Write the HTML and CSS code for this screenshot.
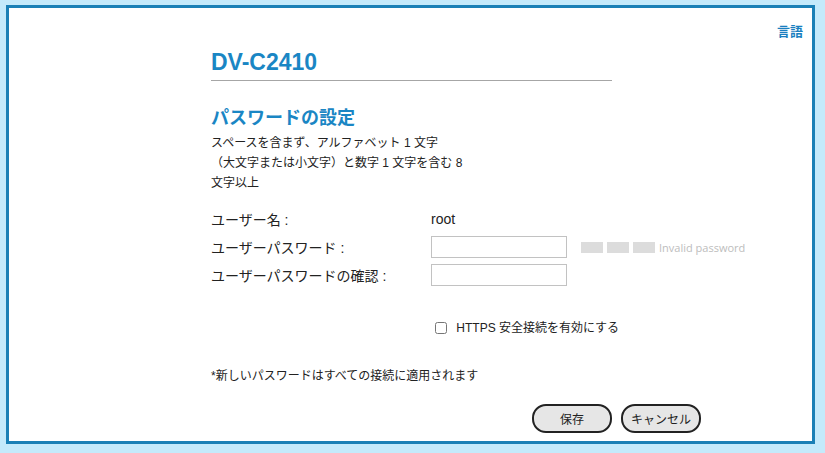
FILE: index.html
```html
<!DOCTYPE html>
<html lang="ja">
<head>
    <meta charset="UTF-8">
    <meta name="viewport" content="width=device-width, initial-scale=1.0">
    <title>DV-C2410</title>
    <link rel="stylesheet" href="styles.css">
</head>
<body>
    <div class="frame">
        <div class="topbar"><a class="lang" href="#">言語</a></div>
        <div class="content">
            <h1>DV-C2410</h1>
            <h2>パスワードの設定</h2>
            <p class="hint">スペースを含まず、アルファベット 1 文字<br>（大文字または小文字）と数字 1 文字を含む 8<br>文字以上</p>

            <div class="form">
                <label>ユーザー名 :</label>
                <span class="value">root</span>

                <label for="pw">ユーザーパスワード :</label>
                <div class="value">
                    <input type="password" id="pw">
                    <span class="strength">
                        <span class="bar"></span><span class="bar"></span><span class="bar"></span>
                        <span class="strength-text">Invalid password</span>
                    </span>
                </div>

                <label for="pw2">ユーザーパスワードの確認 :</label>
                <div class="value">
                    <input type="password" id="pw2">
                </div>
            </div>

            <div class="https">
                <label><input type="checkbox"> HTTPS 安全接続を有効にする</label>
            </div>

            <p class="note">*新しいパスワードはすべての接続に適用されます</p>

            <div class="buttons">
                <button class="save">保存</button>
                <button class="cancel">キャンセル</button>
            </div>
        </div>
    </div>
</body>
</html>
```

FILE: styles.css
```css
body {
    margin: 0;
    background-color: #c4eafb;
    font-family: "Liberation Sans", "Noto Sans CJK JP", sans-serif;
    color: #222;
}
.frame {
    box-sizing: border-box;
    width: 809px;
    height: 439px;
    margin: 5px 0 0 6px;
    border: 3px solid #1a80b6;
    background: #fff;
}
.topbar {
    text-align: right;
    padding: 15px 9px 0 0;
    height: 18px;
    line-height: 16px;
}
.lang {
    font-size: 13px;
    font-weight: bold;
    color: #1a7fc0;
    text-decoration: none;
}
.content {
    width: 560px;
    margin-left: 202px;
}
h1 {
    width: 401px;
    margin: 7px 0 0;
    padding-bottom: 4px;
    font-size: 23px;
    line-height: 28px;
    color: #1a86c4;
    border-bottom: 1px solid #a6a6a6;
}
h2 {
    margin: 25px 0 0;
    font-size: 18px;
    line-height: 24px;
    color: #1a86c4;
}
.hint {
    margin: 3px 0 0;
    font-size: 12px;
    line-height: 20px;
}
.form {
    display: grid;
    grid-template-columns: 220px auto;
    grid-auto-rows: 28px;
    align-items: center;
    margin-top: 12px;
    font-size: 14px;
}
.value {
    display: flex;
    align-items: center;
}
.form input {
    box-sizing: border-box;
    width: 136px;
    height: 22px;
    margin: 0;
    border: 1px solid #c2c2c2;
}
.strength {
    display: flex;
    align-items: center;
    margin-left: 14px;
    white-space: nowrap;
}
.bar {
    width: 22px;
    height: 11px;
    margin-right: 4px;
    background: #dcdcdc;
}
.strength-text {
    font-family: "Open Sans", sans-serif;
    font-size: 11px;
    color: #bdbdbd;
}
.https {
    margin: 29px 0 0 224px;
    font-size: 12px;
    white-space: nowrap;
}
.https input {
    width: 12px;
    height: 12px;
    margin: 0 6px 0 0;
    vertical-align: -2px;
}
.note {
    margin: 31px 0 0;
    font-size: 12px;
}
.buttons {
    display: flex;
    gap: 9px;
    margin: 21px 0 0 321px;
}
button {
    flex: none;
    box-sizing: border-box;
    width: 80px;
    height: 29px;
    padding: 0;
    border: 2px solid #222;
    border-radius: 14px;
    background: #e6e6e6;
    font-family: "Noto Sans CJK JP", sans-serif;
    font-size: 12px;
    color: #222;
    cursor: pointer;
}
```
